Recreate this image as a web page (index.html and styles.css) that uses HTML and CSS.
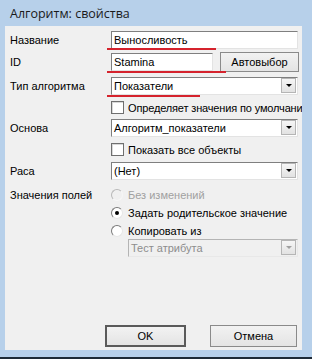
FILE: index.html
```html
<!DOCTYPE html>
<html lang="ru">
<head>
    <meta charset="UTF-8">
    <title>Алгоритм: свойства</title>
    <link rel="stylesheet" href="styles.css">
</head>
<body>

<div class="window">
    <div class="titlebar">Алгоритм: свойства</div>

    <div class="client">
        <div class="row r-name">
            <span class="label">Название</span>
            <div class="edit wide">Выносливость</div>
        </div>

        <div class="row r-id">
            <span class="label">ID</span>
            <div class="edit short">Stamina</div>
            <div class="button auto">Автовыбор</div>
        </div>

        <div class="row r-type">
            <span class="label">Тип алгоритма</span>
            <div class="combo">
                <span class="combo-text">Показатели</span>
                <span class="combo-btn"><i class="arrow"></i></span>
            </div>
        </div>

        <div class="row check r-cb1">
            <span class="box"></span>
            <span class="opt tight">Определяет значения по умолчани</span>
        </div>

        <div class="row r-base">
            <span class="label">Основа</span>
            <div class="combo">
                <span class="combo-text">Алгоритм_показатели</span>
                <span class="combo-btn"><i class="arrow"></i></span>
            </div>
        </div>

        <div class="row check r-cb2">
            <span class="box"></span>
            <span class="opt">Показать все объекты</span>
        </div>

        <div class="row r-race">
            <span class="label">Раса</span>
            <div class="combo">
                <span class="combo-text">(Нет)</span>
                <span class="combo-btn"><i class="arrow"></i></span>
            </div>
        </div>

        <div class="row radio-row r-rad1">
            <span class="label">Значения полей</span>
            <span class="radio disabled"></span>
            <span class="opt disabled">Без изменений</span>
        </div>

        <div class="row radio-row r-rad2">
            <span class="label"></span>
            <span class="radio checked"></span>
            <span class="opt">Задать родительское значение</span>
        </div>

        <div class="row radio-row r-rad3">
            <span class="label"></span>
            <span class="radio"></span>
            <span class="opt">Копировать из</span>
        </div>

        <div class="row r-copy">
            <div class="combo disabled">
                <span class="combo-text">Тест атрибута</span>
                <span class="combo-btn"><i class="arrow"></i></span>
            </div>
        </div>

        <div class="buttons">
            <div class="button ok">OK</div>
            <div class="button cancel">Отмена</div>
        </div>
    </div>

    <!-- пометки красным -->
    <span class="mark mark-name"></span>
    <span class="mark mark-id"></span>
    <span class="mark mark-type"></span>
</div>

</body>
</html>
```

FILE: styles.css
```css
body {
    margin: 0;
    font-family: "Liberation Sans", Arial, sans-serif;
    font-size: 11px;
    color: #000;
}

.window {
    position: relative;
    width: 312px;
    height: 359px;
    box-sizing: border-box;
    background: #b7d0ea;
    border-bottom: 2px solid #1e2a36;
}

.titlebar {
    height: 26px;
    line-height: 28px;
    padding-left: 10px;
    font-family: "Open Sans", "Noto Sans", sans-serif;
    font-size: 12.5px;
    color: #1a1a1a;
}

.client {
    display: flex;
    flex-direction: column;
    margin-left: 5px;
    width: 297px;
    height: 324px;
    box-sizing: border-box;
    padding: 0 0 3px 5px;
    background: #f0f0f0;
    overflow: hidden;
}

.row {
    display: flex;
    align-items: center;
    height: 18px;
}

.label {
    width: 101px;
    flex-shrink: 0;
}

.r-name { margin-top: 5px; }
.r-id { margin-top: 3px; height: 20px; }
.r-type { margin-top: 5px; }
.r-cb1 { margin-top: 6px; height: 13px; }
.r-base { margin-top: 5px; }
.r-cb2 { margin-top: 6px; height: 13px; }
.r-race { margin-top: 6px; }
.r-rad1 { margin-top: 8px; height: 13px; }
.r-rad2 { margin-top: 5px; height: 13px; }
.r-rad3 { margin-top: 5px; height: 13px; }
.r-copy { margin-top: 2px; padding-left: 118px; }

.edit {
    height: 18px;
    box-sizing: border-box;
    padding-left: 2px;
    line-height: 16px;
    background: #fff;
    border: 1px solid;
    border-color: #7f7f7f #e3e3e3 #e3e3e3 #7f7f7f;
    white-space: nowrap;
    overflow: hidden;
}

.edit.wide { width: 187px; }
.edit.short { width: 102px; }

.combo {
    display: flex;
    width: 187px;
    height: 18px;
    flex-shrink: 0;
    box-sizing: border-box;
    background: #fff;
    border: 1px solid;
    border-color: #7f7f7f #e3e3e3 #e3e3e3 #7f7f7f;
}

.combo-text {
    flex: 1;
    padding-left: 2px;
    line-height: 16px;
    white-space: nowrap;
}

.combo-btn {
    display: flex;
    align-items: center;
    justify-content: center;
    width: 15px;
    margin: 0 1px 1px 0;
    box-sizing: border-box;
    background: linear-gradient(#f6f6f6, #e2e2e2);
    border: 1px solid #b5b5b5;
}

.arrow {
    width: 0;
    height: 0;
    border-left: 3px solid transparent;
    border-right: 3px solid transparent;
    border-top: 3px solid #000;
}

.combo.disabled {
    width: 170px;
    background: #f0f0f0;
    border-color: #b4b4b4 #e8e8e8 #e8e8e8 #b4b4b4;
    color: #8d8d8d;
}

.combo.disabled .arrow {
    border-top-color: #a0a0a0;
}

.check {
    padding-left: 101px;
}

.box {
    width: 13px;
    height: 13px;
    flex-shrink: 0;
    box-sizing: border-box;
    background: #fff;
    border: 1px solid #6f6f6f;
    box-shadow: inset 1px 1px 0 #d8d8d8;
}

.opt {
    margin-left: 4px;
    white-space: nowrap;
}

.opt.tight {
    letter-spacing: -0.15px;
}

.radio {
    display: flex;
    align-items: center;
    justify-content: center;
    width: 12px;
    height: 12px;
    flex-shrink: 0;
    box-sizing: border-box;
    border-radius: 50%;
    background: #fff;
    border: 1px solid;
    border-color: #7a7a7a #e6e6e6 #e6e6e6 #7a7a7a;
    margin-right: 1px;
}

.radio.checked::after {
    content: "";
    width: 4px;
    height: 4px;
    border-radius: 50%;
    background: #000;
}

.radio.disabled {
    background: #f0f0f0;
    border-color: #b8b8b8 #f6f6f6 #f6f6f6 #b8b8b8;
}

.opt.disabled {
    color: #a0a0a0;
}

.button {
    box-sizing: border-box;
    text-align: center;
    background: linear-gradient(#f2f2f2, #e4e4e4);
    border: 1px solid #8a8a8a;
}

.button.auto {
    width: 79px;
    height: 20px;
    line-height: 18px;
    margin-left: 7px;
}

.buttons {
    display: flex;
    justify-content: flex-end;
    gap: 24px;
    margin-top: auto;
    padding-right: 5px;
}

.buttons .button {
    height: 22px;
    line-height: 20px;
}

.button.ok {
    width: 81px;
    border: 2px solid #5a5a5a;
    line-height: 18px;
}

.button.cancel {
    width: 87px;
}

.mark {
    position: absolute;
    left: 107px;
    height: 2px;
    background: #d5232d;
}

.mark-name { top: 48px; width: 109px; }
.mark-id { top: 71px; width: 119px; }
.mark-type { top: 95px; width: 93px; }
```
